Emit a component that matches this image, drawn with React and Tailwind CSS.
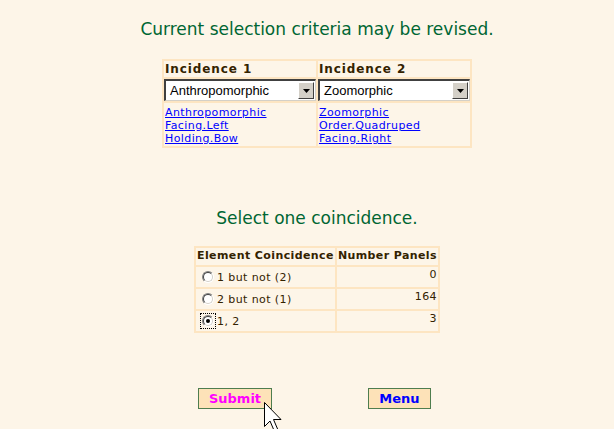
import React from "react";

const Select = ({ value }) => (
  <div className="flex h-[22px] w-[152px] border-t-2 border-l-2 border-b border-r border-t-[#404040] border-l-[#404040] border-b-[#d4d0c8] border-r-[#d4d0c8] bg-white">
    <div className="flex flex-1 items-center pl-1 text-[13px] text-black font-['Liberation_Sans',sans-serif]">
      {value}
    </div>
    <div className="m-[1px] flex w-[16px] items-center justify-center border border-t-white border-l-white border-b-[#404040] border-r-[#404040] bg-[#d4d0c8]">
      <svg width="7" height="4" viewBox="0 0 7 4">
        <path d="M0 0h7L3.5 4z" fill="#000" />
      </svg>
    </div>
  </div>
);

const Radio = ({ checked }) => (
  <span className={`inline-flex p-[1px] ${checked ? "outline-1 outline-dotted outline-black" : ""}`}>
    <span className="relative inline-flex h-[12px] w-[12px] items-center justify-center rounded-full border border-t-[#808080] border-l-[#808080] border-b-white border-r-white bg-white">
      <span className="absolute inset-0 rounded-full border border-t-[#404040] border-l-[#404040] border-b-[#d4d0c8] border-r-[#d4d0c8]" />
      {checked && <span className="h-[4px] w-[4px] rounded-full bg-black" />}
    </span>
  </span>
);

const cell = "bg-[#fdf5e8]";

const Link = ({ children }) => (
  <a href="#" className="block text-[#0000ff] underline tracking-[0.4px]">{children}</a>
);

export default function App() {
  const rows = [
    { label: "1 but not (2)", n: 0 },
    { label: "2 but not (1)", n: 164 },
    { label: "1, 2", n: 3, checked: true },
  ];

  return (
    <div className="relative h-[429px] w-[614px] overflow-hidden bg-[#fdf5e8] font-['DejaVu_Sans',Verdana,sans-serif] text-[11px] text-[#332200]">
      <div className="flex flex-col items-center pl-[20px]">
        <h1 className="mt-[17px] text-[17px] leading-[24px] text-[#006633]">
          Current selection criteria may be revised.
        </h1>

        <table className="mt-[18px] border-separate border-spacing-[2px] bg-[#fde5c2]">
          <tbody>
            <tr>
              <th className={`${cell} h-[16px] px-[1px] text-left text-[12px] font-bold leading-[16px] tracking-[0.9px]`}>Incidence 1</th>
              <th className={`${cell} h-[16px] px-[1px] text-left text-[12px] font-bold leading-[16px] tracking-[0.9px]`}>Incidence 2</th>
            </tr>
            <tr>
              <td className={`${cell} p-0`}><Select value="Anthropomorphic" /></td>
              <td className={`${cell} p-0`}><Select value="Zoomorphic" /></td>
            </tr>
            <tr>
              <td className={`${cell} px-[1px] pt-[3px] pb-[1px] align-top leading-[13px]`}>
                <Link>Anthropomorphic</Link>
                <Link>Facing.Left</Link>
                <Link>Holding.Bow</Link>
              </td>
              <td className={`${cell} px-[1px] pt-[3px] pb-[1px] align-top leading-[13px]`}>
                <Link>Zoomorphic</Link>
                <Link>Order.Quadruped</Link>
                <Link>Facing.Right</Link>
              </td>
            </tr>
          </tbody>
        </table>

        <h2 className="mt-[58px] text-[17px] leading-[24px] text-[#006633]">
          Select one coincidence.
        </h2>

        <table className="mt-[16px] border-separate border-spacing-[2px] bg-[#fde5c2] tracking-[0.4px]">
          <tbody>
            <tr>
              <th className={`${cell} h-[17px] px-[1px] text-left font-bold`}>Element Coincidence</th>
              <th className={`${cell} h-[17px] px-[1px] text-left font-bold`}>Number Panels</th>
            </tr>
            {rows.map((r) => (
              <tr key={r.label}>
                <td className={`${cell} h-[20px] pl-[5px]`}>
                  <div className="flex items-end gap-[2px]">
                    <Radio checked={r.checked} />
                    <span className="leading-[12px]">{r.label}</span>
                  </div>
                </td>
                <td className={`${cell} h-[20px] px-[1px] text-right align-top`}>{r.n}</td>
              </tr>
            ))}
          </tbody>
        </table>
      </div>

      <div className="mt-[55px] flex pl-[198px]">
        <button className="h-[21px] w-[74px] border border-[#4e7d4e] bg-[#fde2b8] text-[13px] font-bold text-[#ff00ff] leading-none">
          Submit
        </button>
        <button className="ml-[96px] h-[21px] w-[63px] border border-[#4e7d4e] bg-[#fde2b8] text-[13px] font-bold text-[#0000ff] leading-none">
          Menu
        </button>
      </div>

      <svg className="absolute left-[264px] top-[402px]" width="20" height="32" viewBox="0 0 20 32">
        <path d="M0.5 0.5 V24.5 L6 19 L10.5 29.5 L14 28 L9.5 17.5 H17 Z" fill="#fff" stroke="#000" strokeWidth="1" strokeLinejoin="miter" />
      </svg>
    </div>
  );
}
